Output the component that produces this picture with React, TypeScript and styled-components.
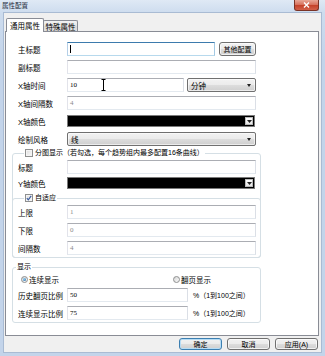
import React from 'react';
import styled, { createGlobalStyle, css } from 'styled-components';

const GlobalStyle = createGlobalStyle`
  html, body { margin: 0; padding: 0; }
  body {
    width: 325px;
    height: 356px;
    overflow: hidden;
    font-family: "Liberation Sans", "Noto Sans CJK SC", sans-serif;
    color: #000;
  }
  * { box-sizing: border-box; }
`;

// Window frame
const Window = styled.div`
  width: 325px;
  height: 356px;
  display: flex;
  flex-direction: column;
  background: linear-gradient(#dfe9f5 0px, #cddcee 13px, #c3d4ea 60px, #c3d4ea 100%);
`;

const TitleBar = styled.div`
  height: 13px;
  flex-shrink: 0;
  display: flex;
  align-items: flex-start;
  justify-content: space-between;
  padding-left: 2px;
`;

const Title = styled.span`
  font-size: 6.5px;
  line-height: 12px;
  color: #1b2a3c;
`;

const CloseButton = styled.div`
  width: 25px;
  height: 11px;
  margin-right: 6px;
  border: 1px solid #7a3326;
  border-top: none;
  border-radius: 0 0 3px 3px;
  background: linear-gradient(#e8a797 0%, #d8735f 45%, #c5432b 55%, #d2614a 100%);
  display: flex;
  align-items: center;
  justify-content: center;
`;

const Client = styled.div`
  flex: 1;
  margin: 0 4px 4px 4px;
  padding: 5px 2px 0 1px;
  background: #f0f0f0;
  box-shadow: 0 0 0 1px #a9bbd3;
  display: flex;
  flex-direction: column;
`;

// Tabs
const TabStrip = styled.div`
  height: 13px;
  flex-shrink: 0;
  display: flex;
  align-items: flex-end;
  padding-left: 1px;
`;

const Tab = styled.div<{ $active?: boolean; $width: number }>`
  width: ${(p) => p.$width}px;
  border: 1px solid #898c95;
  border-bottom: none;
  border-radius: 2px 2px 0 0;
  font-size: 7.5px;
  display: flex;
  align-items: center;
  justify-content: center;
  ${(p) =>
    p.$active
      ? css`
          height: 14px;
          margin-bottom: -1px;
          background: #fff;
          position: relative;
          z-index: 1;
        `
      : css`
          height: 11px;
          margin-left: -1px;
          background: linear-gradient(#f3f3f3, #e3e3e3 50%, #d9d9d9 50%, #e0e0e0);
        `}
`;

const Panel = styled.div`
  height: 305px;
  flex-shrink: 0;
  background: #fff;
  border: 1px solid #898c95;
  padding: 10px 57px 0 6px;
  display: flex;
  flex-direction: column;
`;

const Rows = styled.div<{ $gap: number }>`
  display: flex;
  flex-direction: column;
  gap: ${(p) => p.$gap}px;
`;

const TopRows = styled(Rows)`
  padding: 0 5px 0 6px;
`;

const Row = styled.div`
  height: 14px;
  display: flex;
  align-items: center;
`;

const Label = styled.span`
  width: 49px;
  flex-shrink: 0;
  font-size: 7.5px;
  white-space: nowrap;
`;

const TextBox = styled.div<{ $focused?: boolean; $disabled?: boolean; $width?: number }>`
  position: relative;
  height: 14px;
  ${(p) => (p.$width ? `width: ${p.$width}px; flex-shrink: 0;` : 'flex: 1;')}
  border: 1px solid;
  border-color: ${(p) =>
    p.$focused ? '#3d7bad #a4c9e3 #b7d9ed #b5cfe7' : '#abadb3 #dbdfe6 #e3e9ef #e2e3ea'};
  background: #fff;
  padding-left: 2px;
  font-family: "Liberation Serif", "Noto Sans CJK SC", serif;
  font-size: 7px;
  line-height: 12px;
  color: ${(p) => (p.$disabled ? '#8a8a8a' : '#000')};
  display: flex;
  align-items: center;
`;

const Caret = styled.span`
  width: 1px;
  height: 8px;
  background: #000;
`;

const MousePointer = styled.svg`
  position: absolute;
  left: 33px;
  top: 0px;
`;

const Combo = styled.div<{ $width?: number }>`
  height: 14px;
  ${(p) => (p.$width ? `width: ${p.$width}px; flex-shrink: 0;` : 'flex: 1;')}
  margin-left: ${(p) => (p.$width ? 3 : 0)}px;
  border: 1px solid #707070;
  border-radius: 2px;
  background: linear-gradient(#f2f2f2 0%, #ebebeb 50%, #dddddd 50%, #cfcfcf 100%);
  box-shadow: inset 0 0 0 1px rgba(255, 255, 255, 0.6);
  padding: 0 4px 0 3px;
  display: flex;
  align-items: center;
  justify-content: space-between;
  font-size: 7.5px;
`;

const Arrow = styled.span`
  width: 0;
  height: 0;
  border-left: 2.5px solid transparent;
  border-right: 2.5px solid transparent;
  border-top: 3px solid #222;
`;

const ColorCombo = styled.div`
  flex: 1;
  height: 12px;
  margin-right: 1px;
  border: 1px solid #7a7a7a;
  background: #000;
  display: flex;
  justify-content: flex-end;
  align-items: stretch;
  padding: 1px;
`;

const ColorArrowButton = styled.div`
  width: 8px;
  background: linear-gradient(#fdfdfd, #e6e6e6);
  border: 1px solid #b9b9b9;
  display: flex;
  align-items: center;
  justify-content: center;
`;

const Button = styled.div<{ $primary?: boolean; $width: number; $height: number }>`
  width: ${(p) => p.$width}px;
  height: ${(p) => p.$height}px;
  flex-shrink: 0;
  border: 1px solid ${(p) => (p.$primary ? '#3c7fb1' : '#707070')};
  border-radius: 3px;
  background: linear-gradient(#f2f2f2 0%, #ebebeb 50%, #dddddd 50%, #cfcfcf 100%);
  box-shadow: inset 0 0 0 1px ${(p) => (p.$primary ? '#b6dcf5' : 'rgba(255, 255, 255, 0.7)')};
  font-size: 7px;
  display: flex;
  align-items: center;
  justify-content: center;
  white-space: nowrap;
`;

const SideButton = styled(Button)`
  margin-left: 4px;
`;

// Group boxes
const Group = styled.fieldset`
  margin: 0;
  padding: 0;
  min-width: 0;
  border: 1px solid #d5dfe5;
  border-radius: 3px;
`;

const OuterGroup = styled(Group)<{ $top: number }>`
  margin-top: ${(p) => p.$top}px;
`;

const InnerGroup = styled(Group)`
  margin: 3px -1px -1px -1px;
`;

const Legend = styled.legend<{ $offset: number }>`
  margin-left: ${(p) => p.$offset}px;
  padding: 0 1px;
  height: 10px;
  display: flex;
  align-items: center;
  gap: 1px;
  font-size: 7px;
  line-height: 10px;
  white-space: nowrap;
`;

const GroupBody = styled(Rows)<{ $bottom: number }>`
  padding: 2px 4px ${(p) => p.$bottom}px 5px;
`;

const CheckBox = styled.span<{ $checked?: boolean }>`
  width: 8px;
  height: 8px;
  border: 1px solid #8e8f8f;
  background: linear-gradient(135deg, #dcdcdc, #fbfbfb);
  box-shadow: inset 0 0 0 1px #f4f4f4;
  display: inline-flex;
  align-items: center;
  justify-content: center;
  margin-right: 1px;
`;

const RadioRow = styled.div`
  height: 10px;
  display: flex;
  align-items: center;
  padding-left: 3px;
`;

const RadioItem = styled.div<{ $width?: number }>`
  ${(p) => (p.$width ? `width: ${p.$width}px;` : '')}
  display: flex;
  align-items: center;
  gap: 1px;
  font-size: 7.5px;
`;

const RadioCircle = styled.span<{ $checked?: boolean }>`
  width: 7px;
  height: 7px;
  border-radius: 50%;
  border: 1px solid #8e8f8f;
  background: linear-gradient(135deg, #d6d6d6, #fbfbfb);
  display: inline-flex;
  align-items: center;
  justify-content: center;
  &::after {
    content: '';
    width: 3px;
    height: 3px;
    border-radius: 50%;
    background: ${(p) =>
      p.$checked ? 'radial-gradient(circle at 35% 35%, #9ad8f8, #1d5c9c)' : 'transparent'};
  }
`;

const Suffix = styled.span`
  margin-left: 5px;
  font-size: 7px;
  white-space: nowrap;
`;

const Footer = styled.div`
  margin-top: 2px;
  padding-right: 1px;
  display: flex;
  justify-content: flex-end;
  gap: 5px;
`;

function CheckMark() {
  return (
    <svg width="6" height="6" viewBox="0 0 6 6">
      <path d="M0.8 3.2 L2.3 4.8 L5.2 0.9" fill="none" stroke="#3b5c9e" strokeWidth="1.2" />
    </svg>
  );
}

function SmallArrow() {
  return (
    <svg width="5" height="3" viewBox="0 0 5 3">
      <path d="M0 0 H5 L2.5 3 Z" fill="#222" />
    </svg>
  );
}

function ColorField() {
  return (
    <ColorCombo>
      <ColorArrowButton>
        <SmallArrow />
      </ColorArrowButton>
    </ColorCombo>
  );
}

export default function App() {
  return (
    <>
      <GlobalStyle />
      <Window>
        <TitleBar>
          <Title>属性配置</Title>
          <CloseButton>
            <svg width="7" height="6" viewBox="0 0 7 6">
              <path d="M1 0.5 L6 5.5 M6 0.5 L1 5.5" stroke="#fff" strokeWidth="1.4" />
            </svg>
          </CloseButton>
        </TitleBar>
        <Client>
          <TabStrip>
            <Tab $active $width={38}>通用属性</Tab>
            <Tab $width={35}>特殊属性</Tab>
          </TabStrip>
          <Panel>
            <TopRows $gap={4}>
              <Row>
                <Label>主标题</Label>
                <TextBox $focused>
                  <Caret />
                </TextBox>
                <SideButton $width={37} $height={14}>其他配置</SideButton>
              </Row>
              <Row>
                <Label>副标题</Label>
                <TextBox />
              </Row>
              <Row>
                <Label>X轴时间</Label>
                <TextBox $width={117}>
                  10
                  <MousePointer width="5" height="12" viewBox="0 0 5 12">
                    <path d="M0.5 0.5 H4.5 M2.5 0.5 V11.5 M0.5 11.5 H4.5" stroke="#000" strokeWidth="1" fill="none" />
                  </MousePointer>
                </TextBox>
                <Combo $width={69}>
                  分钟
                  <Arrow />
                </Combo>
              </Row>
              <Row>
                <Label>X轴间隔数</Label>
                <TextBox $disabled>4</TextBox>
              </Row>
              <Row>
                <Label>X轴颜色</Label>
                <ColorField />
              </Row>
              <Row>
                <Label>绘制风格</Label>
                <Combo>
                  线
                  <Arrow />
                </Combo>
              </Row>
            </TopRows>

            <OuterGroup $top={2}>
              <Legend $offset={11}>
                <CheckBox />
                分图显示（若勾选，每个趋势组内最多配置16条曲线）
              </Legend>
              <GroupBody $gap={2} $bottom={0}>
                <Row>
                  <Label>标题</Label>
                  <TextBox />
                </Row>
                <Row>
                  <Label>Y轴颜色</Label>
                  <ColorField />
                </Row>
              </GroupBody>
              <InnerGroup>
                <Legend $offset={11}>
                  <CheckBox $checked>
                    <CheckMark />
                  </CheckBox>
                  自适应
                </Legend>
                <GroupBody $gap={4} $bottom={2}>
                  <Row>
                    <Label>上限</Label>
                    <TextBox $disabled>1</TextBox>
                  </Row>
                  <Row>
                    <Label>下限</Label>
                    <TextBox $disabled>0</TextBox>
                  </Row>
                  <Row>
                    <Label>间隔数</Label>
                    <TextBox $disabled>4</TextBox>
                  </Row>
                </GroupBody>
              </InnerGroup>
            </OuterGroup>

            <OuterGroup $top={4}>
              <Legend $offset={3}>显示</Legend>
              <GroupBody $gap={4} $bottom={2}>
                <RadioRow>
                  <RadioItem $width={152}>
                    <RadioCircle $checked />
                    连续显示
                  </RadioItem>
                  <RadioItem>
                    <RadioCircle />
                    翻页显示
                  </RadioItem>
                </RadioRow>
                <Row>
                  <Label>历史翻页比例</Label>
                  <TextBox $width={121}>50</TextBox>
                  <Suffix>%（1到100之间）</Suffix>
                </Row>
                <Row>
                  <Label>连续显示比例</Label>
                  <TextBox $width={121}>75</TextBox>
                  <Suffix>%（1到100之间）</Suffix>
                </Row>
              </GroupBody>
            </OuterGroup>
          </Panel>
          <Footer>
            <Button $primary $width={43} $height={12}>确定</Button>
            <Button $width={43} $height={12}>取消</Button>
            <Button $width={43} $height={12}>应用(A)</Button>
          </Footer>
        </Client>
      </Window>
    </>
  );
}
